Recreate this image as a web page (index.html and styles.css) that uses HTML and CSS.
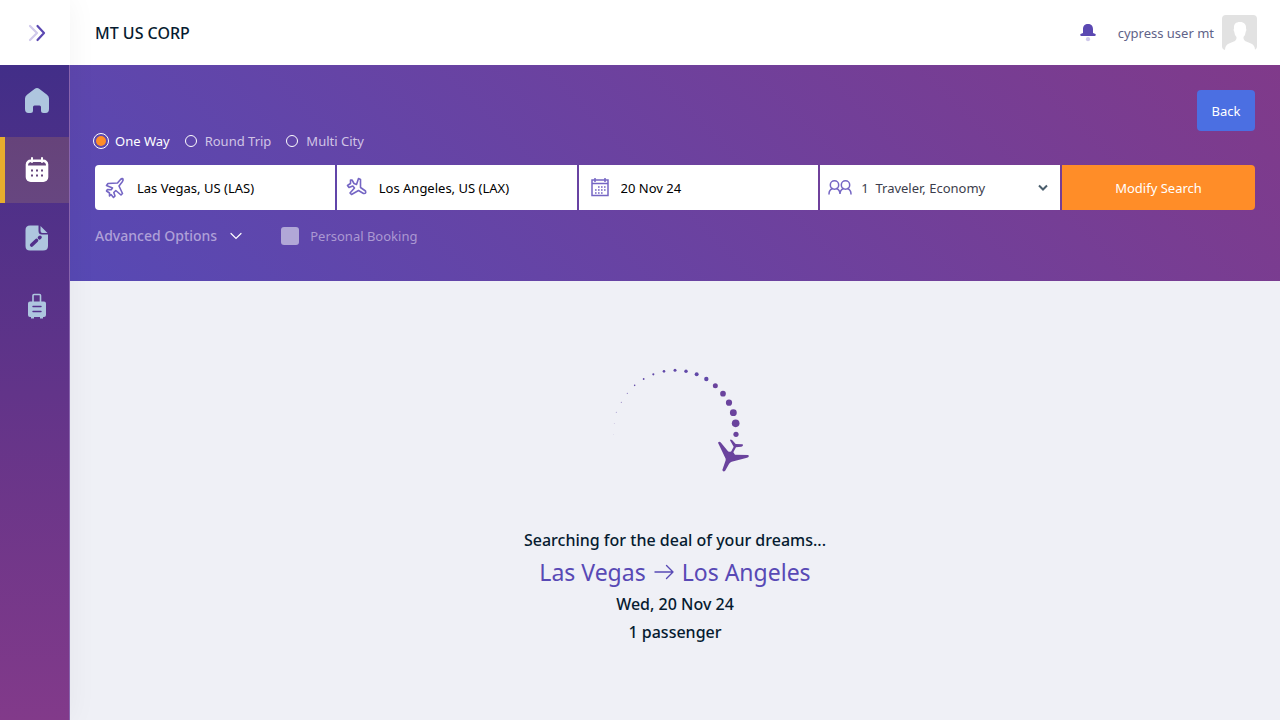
FILE: index.html
```html
<!DOCTYPE html>
<html lang="en">
<head>
<meta charset="utf-8">
<meta name="viewport" content="width=device-width, initial-scale=1">
<title>Flight search</title>
<link rel="stylesheet" href="styles.css">
</head>
<body>
<div class="app">
  <aside class="sidebar">
    <button class="expand" type="button" aria-label="Expand menu">
      <svg width="18" height="18" viewBox="0 0 18 18" fill="none" stroke-width="2.2" stroke-linecap="round" stroke-linejoin="round"><path d="M2 2l7 7-7 7" stroke="#d0c9eb"/><path d="M9.500 2l6.500 7-6.500 7" stroke="#5b48b2"/></svg>
    </button>
    <nav class="menu" aria-label="Main">
      <a class="menu-item" href="#" aria-label="Home">
        <svg width="24" height="25" viewBox="0 0 24 25" fill="#aec6df"><path d="M9.500 1Q12-.8 14.500 1L22 6.800Q24 8.300 24 10.500V21Q24 25 20.500 25H18.500Q16 25 16 22.500V19Q16 17.500 14.500 17.500H9.500Q8 17.500 8 19V22.500Q8 25 5.500 25H3.500Q0 25 0 21V10.500Q0 8.300 2 6.800Z"/></svg>
      </a>
      <a class="menu-item active" href="#" aria-label="Bookings">
        <svg width="24" height="26" viewBox="0 0 24 26"><rect x=".7" y="2.500" width="22.600" height="22.500" rx="5" fill="#fff"/><path d="M3 8.500Q3 5 6.500 5H17.500Q21 5 21 8.500Z" fill="#66467d"/><path d="M7 1v4M17 1v4" stroke="#fff" stroke-width="2" stroke-linecap="round"/><path d="M6 13.500h2m3 0h2m3 0h2M6 18.500h2m3 0h2m3 0h2" stroke="#66467d" stroke-width="1.800"/></svg>
      </a>
      <a class="menu-item" href="#" aria-label="Drafts">
        <svg width="24" height="26" viewBox="0 0 24 26" fill="#aec6df"><path d="M5 .5H13.500V6Q13.500 9.500 17 9.500H23V21Q23 25.500 18 25.500H5Q.5 25.500 .5 21V5Q.5 .5 5 .5ZM15.500 1L22.500 8H17.500Q15.500 8 15.500 6Z"/><path d="M6.700 20l4.800-4.500M14.500 12.800l.5-.5" stroke="#51308b" stroke-width="3.600" stroke-linecap="round"/></svg>
      </a>
      <a class="menu-item" href="#" aria-label="Trips">
        <svg width="20" height="26" viewBox="0 0 20 26"><path d="M6 9V2.500Q6 1.500 7 1.500h5.500q1 0 1 1V9" fill="none" stroke="#aec6df" stroke-width="1.600"/><path d="M3 8.500H17Q19 8.500 19 10.500V22Q19 24 17 24H16v1.500H13V24H7v1.500H4V24H3Q1 24 1 22V10.500Q1 8.500 3 8.500Z" fill="#aec6df"/><path d="M6 13.500h8M6 18.500h8" stroke="#55318d" stroke-width="1.400" stroke-linecap="round"/></svg>
      </a>
    </nav>
  </aside>
  <div class="page">
    <header class="topbar">
      <h1 class="company">MT US CORP</h1>
      <div class="account">
        <button class="bell" type="button" aria-label="Notifications">
          <svg width="16" height="18" viewBox="0 0 16 18"><path d="M3 9V5.500C3 1.500 5 0 8 0s5 1.500 5 5.500V9l2.500 1q.8 2-1 2H1.500q-1.800 0-1-2Z" fill="#5b48b2"/><circle cx="8" cy="15.200" r="2.100" fill="#cfc8eb"/></svg>
        </button>
        <span class="user">cypress user mt</span>
        <svg class="avatar" width="35" height="35" viewBox="0 0 35 35"><rect width="35" height="35" rx="4" fill="#e2e2e2"/><path d="M3 35Q3 30 7 28.500L13 26Q15 24.500 14.500 22Q12.500 20 12.200 16.500Q11 15 12 13.500C11.500 9 14 7 18 7s6.500 2.500 6 6.500q1 1.500-.2 3Q23.500 20 21.500 22q-.5 2.500 1.500 4l6 2.500Q33 30 33 35Z" fill="#fff"/></svg>
      </div>
    </header>
    <section class="search">
      <div class="back-row"><button class="back" type="button">Back</button></div>
      <form class="search-form">
        <div class="trip-types">
          <label class="trip selected"><input type="radio" name="trip" checked>One Way</label>
          <label class="trip"><input type="radio" name="trip">Round Trip</label>
          <label class="trip"><input type="radio" name="trip">Multi City</label>
        </div>
        <div class="fields">
          <label class="field">
            <svg width="24" height="24" viewBox="0 0 24 24" fill="none" stroke="#7566c4" stroke-width="1.600" stroke-linejoin="round"><path d="M14.500 7L17.500 3.500Q19.500 2 20 3T19.300 5.800L16 10L19.500 17.500L18 19L12.800 14.500L10.800 16.500L12 20L10.500 21.500L8 18.500L6.500 20V17L3.500 15L4.500 13.500L8.200 13.800L9.500 12L3.500 9.500L5 7.500Z"/></svg>
            <input type="text" aria-label="From" value="Las Vegas, US (LAS)">
          </label>
          <label class="field">
            <svg width="24" height="24" viewBox="0 0 24 24" fill="none" stroke="#7566c4" stroke-width="1.600" stroke-linejoin="round"><path d="M15.500 11.500L20.500 15Q21.500 18 18.500 17.500L13.500 14.500L6.500 18.500L5 17L9.500 12L7.800 10L4 11.500L2.500 9.500L5.500 7.500V4H7L9 7.500L11.500 8.500L13.500 2.500L15.500 3.500Z"/></svg>
            <input type="text" aria-label="To" value="Los Angeles, US (LAX)">
          </label>
          <label class="field">
            <svg width="24" height="24" viewBox="0 0 24 24" fill="none" stroke="#7566c4"><path d="M5 4h16v15.500H5ZM5 7.500h16" stroke-width="1.500"/><path d="M8 2v4M18 2v4" stroke-width="1.500"/><path d="M11 11h8M8 14h11M8 17h8" stroke-width="1.600" stroke-dasharray="1.600 1.400"/></svg>
            <input type="text" aria-label="Departure date" value="20 Nov 24">
          </label>
          <label class="field travelers">
            <svg width="24" height="24" viewBox="0 0 24 24" fill="none" stroke="#7566c4" stroke-width="1.500" stroke-linecap="round"><circle cx="6.500" cy="9" r="4.200"/><circle cx="17.500" cy="9" r="4.200"/><path d="M1 18q0-4 3.500-5.500M8.500 12.500Q12 14 12 18Q12 14 15.500 12.500M19.500 12.500Q23 14 23 18"/></svg>
            <select aria-label="Travelers and class"><option>1&nbsp; Traveler, Economy</option></select>
            <svg class="chevron" width="10" height="8" viewBox="0 0 10 8" fill="none" stroke="#4a5d6c" stroke-width="2"><path d="M1 1.500l4 4 4-4"/></svg>
          </label>
          <button class="modify" type="submit">Modify Search</button>
        </div>
        <div class="extras">
          <button class="advanced" type="button">Advanced Options
            <svg width="12" height="8" viewBox="0 0 12 8" fill="none" stroke="#fff" stroke-width="1.200" stroke-linecap="round"><path d="M1 1.500l5 5 5-5"/></svg>
          </button>
          <label class="personal"><input type="checkbox">Personal Booking</label>
        </div>
      </form>
    </section>
    <main class="loading">
      <svg class="loader" width="150" height="110" viewBox="0 30 450 330" fill="#6a439d" role="img" aria-label="Loading">
        <g fill="#6148a8"><circle cx="40" cy="238" r="1" opacity=".3"/><circle cx="43" cy="205" r="1.300" opacity=".5"/><circle cx="49" cy="172" r="1.500" opacity=".6"/><circle cx="64" cy="142" r="1.800" opacity=".6"/><circle cx="82" cy="115" r="1.900" opacity=".7"/><circle cx="104" cy="91" r="2.400"/><circle cx="131" cy="72" r="2.700"/><circle cx="160" cy="58" r="3.200"/><circle cx="192" cy="49" r="3.900"/><circle cx="225" cy="46" r="4.500"/><circle cx="258" cy="49" r="5.200"/><circle cx="290" cy="58" r="5.900"/><circle cx="319" cy="72" r="6.600"/></g>
        <circle cx="346" cy="92" r="7.500"/><circle cx="369" cy="116" r="8.500"/><circle cx="387" cy="143" r="9.300"/><circle cx="400" cy="173" r="10.300"/><circle cx="407" cy="205" r="11.500"/><circle cx="408" cy="238" r="7.800"/>
        <path d="M354 263Q358 257 363 263L384 289Q389 292 394 289L401 275L390 256Q391 251 397 256L407 267L428 268Q431 274 424 275L408 277L400 292L405 299L445 300Q449 306 441 308L395 320Q389 322 387 327L375 348Q369 352 367 345L377 316V311Z"/>
      </svg>
      <p class="status">Searching for the deal of your dreams...</p>
      <h2 class="route">Las Vegas
        <svg width="20" height="16" viewBox="0 0 20 16" fill="none" stroke="#5849b5" stroke-width="1.400" stroke-linecap="round" stroke-linejoin="round"><path d="M1 8h18M12.500 1.500L19 8l-6.500 6.500"/></svg>
        Los Angeles</h2>
      <p class="detail">Wed, 20 Nov 24</p>
      <p class="detail">1 passenger</p>
    </main>
  </div>
</div>
</body>
</html>
```

FILE: styles.css
```css
* { box-sizing: border-box; }
body { margin: 0; font-family: "Noto Sans", sans-serif; font-size: 13px; line-height: 20px; color: #061b30; background: #eff0f6; }
button, input, select { font: inherit; color: inherit; }
button { border: 0; padding: 0; background: none; cursor: pointer; }
h1, h2, p { margin: 0; }
svg { display: block; flex: none; }
.app { display: flex; min-height: 100vh; }

.sidebar { flex: none; width: 70px; display: flex; flex-direction: column; box-shadow: 0 0 30px rgba(0, 0, 0, .05); z-index: 1; }
.expand { height: 65px; background: #fff; display: grid; place-items: center; padding-left: 4px; }
.menu { flex: 1; display: flex; flex-direction: column; gap: 2px; padding-top: 4px; background: linear-gradient(180deg, #422e88, #823a8a); border-right: 1px solid #8864ad; }
.menu-item { height: 66px; display: grid; place-items: center; padding-left: 5px; }
.menu-item:first-child { padding-bottom: 4px; }
.menu-item.active { background: linear-gradient(#66437a, #674680); border-left: 5px solid #e7ad2d; padding-left: 0; }

.page { flex: 1; min-width: 0; display: flex; flex-direction: column; }
.topbar { height: 65px; padding: 0 23px 0 25px; background: #fff; display: flex; justify-content: space-between; align-items: center; }
.company { font-size: 16px; font-weight: 500; }
.account { display: flex; align-items: center; color: #5f6388; }
.bell { margin-right: 22px; }
.avatar { margin-left: 8px; }

.search { padding: 25px 25px 32px; background: linear-gradient(45deg, #5749b4, #803a8a); color: #fff; }
.back-row { display: flex; justify-content: flex-end; }
.back { width: 58px; height: 41px; border-radius: 4px; background: #4b6fe2; }
.trip-types { display: flex; gap: 15px; height: 20px; margin-bottom: 14px; }
.trip { display: flex; align-items: center; gap: 8px; color: #d1c4e5; }
.trip.selected { color: #fff; gap: 6px; margin-left: -2px; }
.trip input { appearance: none; margin: 0; width: 12px; height: 12px; border: 1px solid #fff; border-radius: 50%; }
.trip input:checked { width: 16px; height: 16px; background: #ff8d28; background-clip: content-box; padding: 2px; }
.fields { display: grid; grid-template-columns: repeat(4, minmax(0, 1fr)) minmax(0, 193px); gap: 2px; height: 45px; }
.field { display: flex; align-items: center; gap: 10px; min-width: 0; padding: 0 12px 0 8px; background: #fff; color: #000; }
.field:first-child { border-radius: 4px 0 0 4px; }
.field input, .field select { flex: 1; min-width: 0; width: 0; height: 30px; padding: 0; margin: 0; border: 0; outline: 0; background: transparent; }
.travelers { gap: 9px; color: #3c3d4c; }
.travelers select { appearance: none; }
.modify { background: #ff8d28; border-radius: 0 4px 4px 0; }
.extras { display: flex; align-items: center; gap: 39px; margin-top: 14px; height: 24px; margin-bottom: 1px; }
.advanced { display: flex; align-items: center; gap: 13px; color: #afa0d8; font-size: 14px; font-weight: 500; }
.personal { display: flex; align-items: center; gap: 11px; color: #ab98d2; }
.personal input { appearance: none; margin: 0; width: 18px; height: 18px; border-radius: 3px; background: #b1a7d7; }

.loading { flex: 1; display: flex; flex-direction: column; align-items: center; padding-top: 84px; font-size: 16px; font-weight: 500; line-height: 28px; }
.status { margin-top: 51px; }
.route { display: flex; align-items: center; gap: 8px; color: #5849b5; font-size: 23px; font-weight: 400; line-height: 36px; }
```
